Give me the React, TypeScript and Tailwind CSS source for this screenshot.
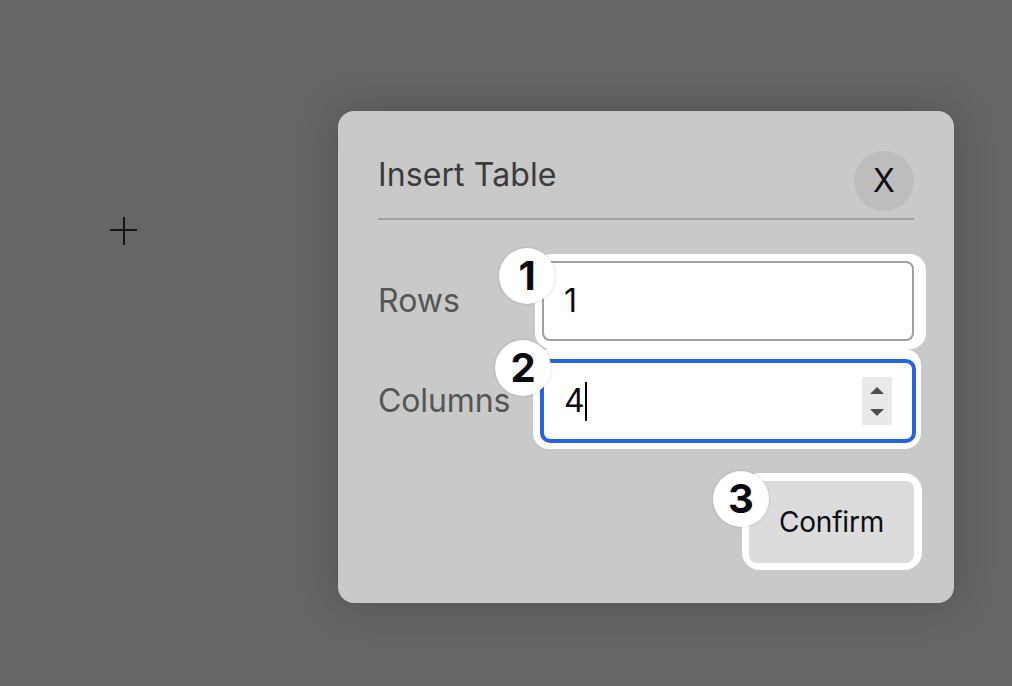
const inter = "font-['Inter','Noto_Sans',sans-serif]";

function Badge({ n, className }: { n: string; className: string }) {
  return (
    <div
      className={`absolute flex h-[56px] w-[56px] items-center justify-center rounded-full bg-white text-[40px] leading-none font-bold text-[#0a0a0f] shadow-[0_0_3px_rgba(0,0,0,0.18)] ${className}`}
    >
      {n}
    </div>
  );
}

export default function App() {
  return (
    <div className={`flex h-[686px] w-[1012px] items-start overflow-hidden bg-[#666666] antialiased ${inter}`}>
      <svg className="mt-[217px] ml-[109px] shrink-0" width="29" height="28" viewBox="0 0 29 28">
        <path d="M15 0V28M1 13H28" stroke="#15151a" strokeWidth="2" fill="none" />
      </svg>
      <div className="mt-[111px] ml-[200px] flex h-[492px] w-[616px] shrink-0 flex-col rounded-[16px] bg-[#c9c9c9] px-10 pt-10 shadow-[0_0_44px_rgba(0,0,0,0.22)]">
        <div className="flex h-[69px] shrink-0 items-start justify-between border-b-[2px] border-[#a0a0a0]">
          <h1 className="pt-[3px] text-[32px] leading-[42px] font-normal tracking-[0.1px] text-[#3b3b3b]">Insert Table</h1>
          <div className="flex h-[60px] w-[60px] items-center justify-center rounded-full bg-[#bdbdbd] text-[32px] leading-none text-[#0d0d12]">
            X
          </div>
        </div>

        <div className="mt-[34px] flex h-[95px] shrink-0 items-center">
          <span className="w-[157px] shrink-0 pb-[2px] text-[32px] text-[#555555]">Rows</span>
          <div className="relative -mr-3 h-[95px] flex-1 rounded-[16px] bg-white pt-[7px] pr-3 pb-[8px] pl-[7px]">
            <div className="flex h-[80px] items-center rounded-[8px] border-[2px] border-[#a0a0a0] pl-[20px] text-[32px] text-[#0d0d12]">
              1
            </div>
            <Badge n="1" className="top-[-6px] left-[-36px]" />
          </div>
        </div>

        <div className="flex h-[100px] shrink-0 items-center">
          <span className="w-[155px] shrink-0 pt-[4px] text-[32px] tracking-[-0.1px] text-[#555555]">Columns</span>
          <div className="relative -mr-[7px] h-[100px] flex-1 rounded-[16px] bg-white pt-[10px] pr-[5px] pb-[6px] pl-[7px]">
            <div className="flex h-[84px] items-center rounded-[10px] border-[4px] border-[#2563eb] pr-[20px] pl-[20px] text-[32px] text-[#0d0d12]">
              <span>4</span>
              <span className="h-[39px] w-[2px] bg-black" />
              <div className="ml-auto flex h-[48px] w-[30px] flex-col items-center justify-center gap-[15px] bg-[#e9e9e9]">
                <svg width="14" height="7" viewBox="0 0 14 7">
                  <path d="M7 0L14 7H0Z" fill="#4d4d4d" />
                </svg>
                <svg width="14" height="7" viewBox="0 0 14 7">
                  <path d="M0 0H14L7 7Z" fill="#4d4d4d" />
                </svg>
              </div>
            </div>
            <Badge n="2" className="top-[-9px] left-[-38px]" />
          </div>
        </div>

        <div className="mt-[24px] -mr-2 flex shrink-0 justify-end">
          <div className="relative h-[97px] w-[180px] rounded-[18px] bg-white pt-2 pr-2 pb-[7px] pl-[7px]">
            <div className="flex h-[82px] items-center justify-center rounded-[8px] bg-[#dcdcdc] text-[28px] tracking-[-0.2px] text-[#0d0d12]">
              Confirm
            </div>
            <Badge n="3" className="top-[-2px] left-[-29px]" />
          </div>
        </div>
      </div>
    </div>
  );
}
